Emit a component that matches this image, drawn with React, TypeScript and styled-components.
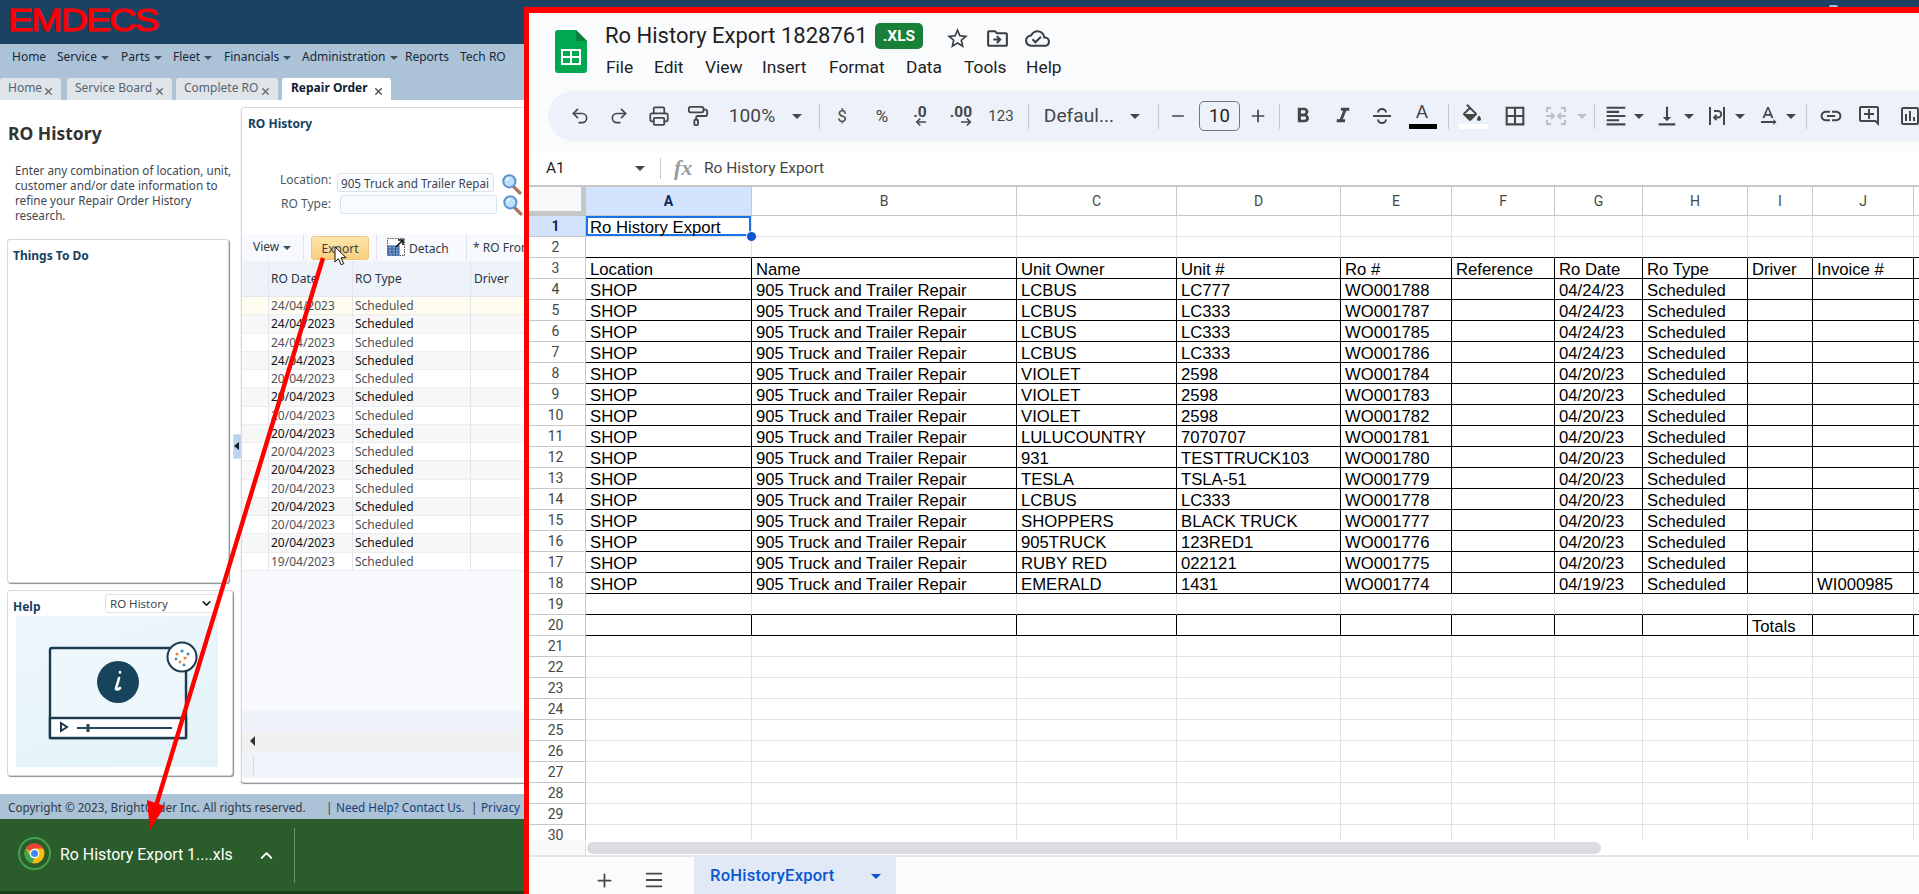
import React from "react";
import styled, { createGlobalStyle } from "styled-components";
import { ChevronDown, ChevronUp, Plus, Minus, Menu as MenuIcon, Undo2, Redo2, Printer, PaintRoller, X } from "lucide-react";
import {
  MdFormatBold, MdFormatItalic, MdFormatColorFill, MdBorderAll,
  MdFormatAlignLeft, MdVerticalAlignBottom, MdTextRotationNone, MdLink,
  MdOutlineAddComment, MdOutlineInsertChart, MdStarBorder, MdOutlineDriveFileMove, MdOutlineCloudDone,
} from "react-icons/md";

const Global = createGlobalStyle`
  html, body { margin: 0; padding: 0; background: #fff; overflow: hidden; }
  * { box-sizing: border-box; }
`;

const APP = `"Noto Sans", "Open Sans", sans-serif`;
const G = `Roboto, "Noto Sans", sans-serif`;
const ARIAL = `"Liberation Sans", Arial, sans-serif`;

const Page = styled.div`
  position: relative; width: 1919px; height: 894px; overflow: hidden; background: #fff;
  font-family: ${APP}; font-size: 12px;
`;

/* ---------- left application ---------- */
const TopBar = styled.header`position: absolute; left: 0; top: 0; width: 100%; height: 44px; background: #1c4263;`;
const Logo = styled.div`
  position: absolute; left: 8px; top: 2px; color: #fb0007; font: 400 32px/36px ${ARIAL};
  letter-spacing: -1.5px; transform-origin: left center; transform: scaleX(1.17);
  -webkit-text-stroke: 1.1px #fb0007;
`;
const AvatarPeek = styled.div`position: absolute; left: 1829px; top: 5px; width: 9px; height: 2px; background: #9fc2dc; border-radius: 4px 4px 0 0;`;
const NavBar = styled.nav`position: absolute; left: 0; top: 44px; width: 524px; height: 56px; background: #acc2d6;`;
const NavLink = styled.span<{ $x: number }>`
  position: absolute; left: ${(p) => p.$x}px; top: 3px; line-height: 20px; font-size: 12px; color: #17293b; white-space: nowrap;
  display: flex; align-items: center;
`;
const Caret = styled.i`
  display: inline-block; width: 0; height: 0; margin-left: 4px; margin-top: 2px;
  border-left: 4px solid transparent; border-right: 4px solid transparent; border-top: 4px solid #3d4f60;
`;
const TabBtn = styled.div<{ $x: number; $w: number; $on?: boolean }>`
  position: absolute; left: ${(p) => p.$x}px; top: 78px; width: ${(p) => p.$w}px; height: 22px;
  background: ${(p) => (p.$on ? "#fff" : "#dfe4e8")}; border-radius: 3px 3px 0 0;
  padding-left: ${(p) => (p.$on ? 9 : 8)}px; line-height: 20px; white-space: nowrap;
  color: ${(p) => (p.$on ? "#10202f" : "#566472")}; font-weight: ${(p) => (p.$on ? 700 : 400)}; font-size: 12px;
  svg { position: absolute; right: 7px; top: 8px; }
`;
const PageTitle = styled.h1`position: absolute; left: 8px; top: 121px; margin: 0; font: 700 17.5px/24px ${APP}; color: #333;`;
const Intro = styled.p`position: absolute; left: 15px; top: 163px; width: 222px; margin: 0; font-size: 11.7px; line-height: 15px; color: #3f4750;`;
const Card = styled.section<{ $w: number; $t: number; $h: number }>`
  position: absolute; left: 7px; top: ${(p) => p.$t}px; width: ${(p) => p.$w}px; height: ${(p) => p.$h}px;
  background: #fff; border: 1px solid #d5d8da; border-radius: 3px; box-shadow: 1px 1px 1px #8c8c8c;
`;
const CardTitle = styled.h3`position: absolute; left: 5px; top: 7px; margin: 0; font: 700 12px/18px ${APP}; color: #17405f;`;
const HelpSelect = styled.div`
  position: absolute; left: 97px; top: 3px; width: 113px; height: 19px; border: 1px solid #dde2e6; border-radius: 3px;
  background: #fff; color: #3d4852; font-size: 11.5px; line-height: 17px; padding-left: 4px;
  svg { position: absolute; right: 4px; top: 2px; }
`;
const HelpArt = styled.div`
  position: absolute; left: 8px; top: 25px; width: 202px; height: 151px;
  background: linear-gradient(160deg, #eef7fd 0%, #e2f3f8 100%);
`;
const Handle = styled.div`
  position: absolute; left: 233px; top: 434px; width: 8px; height: 25px; background: #bcd3ef; border: 1px solid #cfe0f4; border-radius: 1px;
  &:after { content: ""; position: absolute; left: 0; top: 7px; border-top: 4px solid transparent; border-bottom: 4px solid transparent; border-right: 5px solid #16202b; }
`;
const Panel = styled.section`
  position: absolute; left: 241px; top: 107px; width: 290px; height: 676px; background: #fff;
  border: 1px solid #d8dbdd; border-radius: 3px; box-shadow: 0 1px 1px #8c8c8c;
`;
const PanelTitle = styled.h2`position: absolute; left: 6px; top: 7px; margin: 0; font: 700 12px/18px ${APP}; color: #17405f;`;
const FieldLabel = styled.label<{ $x: number; $y: number }>`position: absolute; left: ${(p) => p.$x}px; top: ${(p) => p.$y}px; font-size: 12px; line-height: 18px; color: #4d5862;`;
const FieldInput = styled.input<{ $x: number; $y: number }>`
  position: absolute; left: ${(p) => p.$x}px; top: ${(p) => p.$y}px; width: 157px; height: 19px; padding: 0 3px; margin: 0;
  border: 1px solid #dae3ea; border-radius: 3px; background: #f9fcfe; color: #3a434c; font: 11.7px ${APP}; outline: none;
`;
const Lens = styled.svg<{ $x: number; $y: number }>`position: absolute; left: ${(p) => p.$x}px; top: ${(p) => p.$y}px;`;
const GridTools = styled.div`position: absolute; left: 0; top: 126px; width: 100%; height: 27px; background: #f7f9fc;`;
const ToolText = styled.span<{ $x: number; $y?: number }>`position: absolute; left: ${(p) => p.$x}px; top: ${(p) => p.$y ?? 4}px; line-height: 18px; font-size: 12px; color: #2f3a45; white-space: nowrap; display: flex; align-items: center;`;
const ToolSep = styled.i<{ $x: number }>`position: absolute; left: ${(p) => p.$x}px; top: 0; width: 1px; height: 26px; background: #dfe4ea;`;
const ExportBtn = styled.button`
  position: absolute; left: 69px; top: 2px; width: 58px; height: 24px; padding: 0; border: 1px solid #ecc67e; border-radius: 3px;
  background: linear-gradient(#fde6ad, #f9cf7c); color: #36404a; font: 12px ${APP};
`;
const DetachIcon = styled.svg`position: absolute; left: 145px; top: 4px;`;
const GridHead = styled.div`position: absolute; left: 0; top: 153px; width: 100%; height: 36px; background: #eef2f9; border-bottom: 1px solid #e3e7ee;`;
const ColLine = styled.i<{ $x: number; $h: number }>`position: absolute; z-index: 1; left: ${(p) => p.$x}px; top: 0; width: 1px; height: ${(p) => p.$h}px; background: #e2e6ec;`;
const HeadCell = styled.span<{ $x: number }>`position: absolute; left: ${(p) => p.$x}px; top: 9px; font-size: 12px; line-height: 18px; color: #263340;`;
const GridBody = styled.div`position: absolute; left: 0; top: 189px; width: 100%; height: 415px; background: #f7f9fd;`;
const GridRow = styled.div<{ $kind: number }>`
  position: relative; height: 18.25px; line-height: 17px; font-size: 12px; border-bottom: 1px solid #eceeef;
  background: ${(p) => (p.$kind === 0 ? "#fffdf0" : p.$kind === 1 ? "#f7f7f7" : "#fff")};
  color: ${(p) => (p.$kind === 1 ? "#0f141a" : "#4d5157")};
`;
const RowCell = styled.span<{ $x: number }>`position: absolute; left: ${(p) => p.$x}px; top: 0;`;
const GridBand = styled.div<{ $t: number; $h: number; $c: string }>`position: absolute; left: 0; top: ${(p) => p.$t}px; width: 100%; height: ${(p) => p.$h}px; background: ${(p) => p.$c};`;
const ScrollArrow = styled.i`position: absolute; left: 8px; top: 5px; border-top: 5px solid transparent; border-bottom: 5px solid transparent; border-right: 5px solid #333;`;
const PagerSep = styled.i`position: absolute; left: 11px; top: 4px; width: 1px; height: 19px; background: #d7dce4;`;
const Footer = styled.footer`position: absolute; left: 0; top: 794px; width: 524px; height: 25px; background: #acc2d6;`;
const FootText = styled.span<{ $x: number; $link?: boolean }>`position: absolute; left: ${(p) => p.$x}px; top: 4px; line-height: 18px; font-size: 11.7px; white-space: nowrap; color: ${(p) => (p.$link ? "#123f78" : "#2e3a46")};`;
const DownloadBar = styled.div`position: absolute; left: 0; top: 819px; width: 524px; height: 75px; background: #2a5c2c; border-bottom: 3px solid #1d3d1f;`;
const DownloadName = styled.span`position: absolute; left: 60px; top: 25px; font: 400 15.9px/22px ${G}; color: #fff; white-space: nowrap;`;
const DownloadChevron = styled(ChevronUp)`position: absolute; left: 257px; top: 27px; color: #fff;`;
const DownloadSep = styled.i`position: absolute; left: 294px; top: 9px; width: 1px; height: 55px; background: #6f8f70;`;
const ChromeSvg = styled.svg`position: absolute; left: 18px; top: 18px;`;
const Overlay = styled.svg`position: absolute; left: 0; top: 0; z-index: 5; pointer-events: none;`;

/* ---------- google sheet ---------- */
const Sheet = styled.main`
  position: absolute; z-index: 6; left: 524px; top: 7px; right: 0; bottom: 0; border-left: 5px solid #f00; border-top: 6px solid #f00;
  background: #f9fbfd; overflow: hidden;
`;
const SheetIcon = styled.svg`position: absolute; left: 26px; top: 17px;`;
const DocTitle = styled.h1`position: absolute; left: 76px; top: 9px; margin: 0; font: 400 22px/28px ${G}; color: #1f1f1f; white-space: nowrap;`;
const Badge = styled.span`
  position: absolute; left: 346px; top: 10px; width: 48px; height: 26px; background: #188038; border-radius: 5px; color: #fff;
  font: 700 15.5px/26px ${G}; text-align: center;
`;
const HeadIcon = styled.span<{ $x: number }>`position: absolute; left: ${(p) => p.$x - 529 - 13}px; top: 12px; width: 26px; height: 26px; color: #3c4043; display: flex; align-items: center; justify-content: center;`;
const MenuItem = styled.span<{ $x: number }>`position: absolute; left: ${(p) => p.$x - 529}px; top: 43px; font: 400 17.4px/22px ${G}; color: #1f1f1f;`;
const ToolPill = styled.div`position: absolute; left: 19px; top: 78px; width: 1400px; height: 50px; background: #edf2fa; border-radius: 25px 0 0 25px; color: #444746;`;
const Tool = styled.span<{ $x: number; $muted?: boolean }>`
  position: absolute; left: ${(p) => p.$x - 548}px; top: 25px; transform: translate(-50%, -50%); display: flex; align-items: center; justify-content: center;
  color: ${(p) => (p.$muted ? "#bcc0c4" : "#444746")}; font: 400 17px/22px ${G}; white-space: nowrap;
`;
const ToolLargeText = styled(Tool)`font-size: 19.2px;`;
const ToolSmallText = styled(Tool)`font-size: 15px;`;
const ToolColorA = styled(Tool)`top: 21px; font-size: 19px; font-weight: 400;`;
const PillSep = styled.i<{ $x: number }>`position: absolute; left: ${(p) => p.$x - 548}px; top: 13px; width: 1px; height: 25px; background: #c7c7c7;`;
const Tri = styled.i<{ $x: number; $muted?: boolean }>`position: absolute; left: ${(p) => p.$x - 548 - 5}px; top: 23px; border-left: 5px solid transparent; border-right: 5px solid transparent; border-top: 5px solid ${(p) => (p.$muted ? "#bcc0c4" : "#444746")};`;
const SizeBox = styled.span`position: absolute; left: 651px; top: 10px; width: 41px; height: 30px; border: 1px solid #747775; border-radius: 5px; text-align: center; font: 400 18.5px/28px ${G}; color: #1f1f1f;`;
const ColorBar = styled.i<{ $x: number; $w: number; $c: string }>`position: absolute; left: ${(p) => p.$x - 548}px; top: 33px; width: ${(p) => p.$w}px; height: 5px; background: ${(p) => p.$c};`;
const FormulaBar = styled.div`position: absolute; left: 0; top: 138px; width: 100%; height: 36px; background: #fff; border-bottom: 2px solid #c7c7c7;`;
const CellName = styled.span`position: absolute; left: 17px; top: 6px; font: 400 15.5px/22px ${G}; color: #1f1f1f;`;
const FormulaTri = styled.i`position: absolute; left: 106px; top: 15px; border-left: 5px solid transparent; border-right: 5px solid transparent; border-top: 5px solid #444746;`;
const FormulaSep = styled.i`position: absolute; left: 131px; top: 7px; width: 1px; height: 21px; background: #c7c7c7;`;
const Fx = styled.span`position: absolute; left: 145px; top: 4px; font: italic 700 22px/26px "Liberation Serif", serif; color: #9a9b9c;`;
const FormulaText = styled.span`position: absolute; left: 175px; top: 6px; font: 400 15.5px/22px ${G}; color: #444746;`;
const SheetGrid = styled.div`
  position: absolute; left: 0; top: 174px; width: 1390px; height: 653px; overflow: hidden; background: #fff; display: grid;
  grid-template-columns: 57px 166px 265px 160px 164px 111px 103px 88px 105px 65px 101px 20px;
  grid-auto-rows: 21px; grid-template-rows: 29px;
`;
const Corner = styled.div`background: #f8f9fa; border-right: 5px solid #c4c7c5; border-bottom: 5px solid #c4c7c5;`;
const ColHead = styled.div<{ $on?: boolean }>`
  display: flex; align-items: center; justify-content: center; border-right: 1px solid #c7c7c7; border-bottom: 1px solid #c7c7c7;
  font: ${(p) => (p.$on ? 700 : 400)} 14px ${G}; background: ${(p) => (p.$on ? "#d3e3fd" : "#fff")}; color: ${(p) => (p.$on ? "#0b2a55" : "#444746")};
`;
const RowHead = styled.div<{ $on?: boolean }>`
  display: flex; align-items: center; justify-content: center; padding-right: 3px; border-right: 1px solid #c7c7c7; border-bottom: 1px solid #c7c7c7;
  font: ${(p) => (p.$on ? 700 : 400)} 14px ${G}; background: ${(p) => (p.$on ? "#d3e3fd" : "#fff")}; color: ${(p) => (p.$on ? "#0b2a55" : "#444746")};
`;
const Cell = styled.div<{ $ink?: boolean; $under?: boolean; $sel?: boolean }>`
  position: relative; padding: 1px 0 0 4px; font: 400 16.7px/21px ${ARIAL}; color: #000; white-space: nowrap; overflow: visible;
  border-right: 1px solid ${(p) => (p.$ink ? "#000" : "#e1e1e1")}; border-bottom: 1px solid ${(p) => (p.$ink || p.$under ? "#000" : "#e1e1e1")};
  ${(p) => p.$sel && `box-shadow: inset 0 0 0 2px #1a73e8; z-index: 2;`}
`;
const FillDot = styled.i`position: absolute; right: -6px; bottom: -6px; width: 11px; height: 11px; border-radius: 50%; background: #0b57d0; border: 1px solid #fff; z-index: 3;`;
const HScroll = styled.div`position: absolute; left: 0; top: 827px; width: 100%; height: 17px; background: #fff; border-bottom: 2px solid #e3e5e8;`;
const Thumb = styled.i`position: absolute; left: 58px; top: 2px; width: 1014px; height: 12px; border-radius: 6px; background: #dadce0;`;
const ScrollCorner = styled.i`position: absolute; left: 0; top: 0; width: 57px; height: 15px; background: #f8f9fa; border-right: 1px solid #e1e1e1;`;
const SheetTabs = styled.div`position: absolute; left: 0; top: 844px; width: 100%; height: 37px; background: #f9fbfd;`;
const TabIcon = styled.span<{ $x: number }>`position: absolute; left: ${(p) => p.$x - 529 - 11}px; top: 12px; width: 22px; height: 22px; display: flex; align-items: center; justify-content: center; color: #444746;`;
const ActiveSheet = styled.div`
  position: absolute; left: 165px; top: 0; width: 202px; height: 37px; background: #e1e9f7; color: #0b57d0;
  font: 500 16.6px/37px ${G}; padding-left: 16px; letter-spacing: 0.2px;
`;
const ActiveTri = styled.i`position: absolute; left: 177px; top: 17px; border-left: 5px solid transparent; border-right: 5px solid transparent; border-top: 5px solid #0b57d0;`;

const nav: [string, number, boolean][] = [
  ["Home", 12, false], ["Service", 57, true], ["Parts", 121, true], ["Fleet", 173, true],
  ["Financials", 224, true], ["Administration", 302, true], ["Reports", 405, false], ["Tech RO", 460, false],
];
const tabs: [string, number, number, boolean][] = [
  ["Home", 0, 61, false], ["Service Board", 67, 105, false], ["Complete RO", 176, 102, false], ["Repair Order", 282, 109, true],
];
const dates = [...Array(4).fill("24/04/2023"), ...Array(10).fill("20/04/2023"), "19/04/2023"] as string[];

const cols = ["A", "B", "C", "D", "E", "F", "G", "H", "I", "J", "K"];
const B = "905 Truck and Trailer Repair";
const data: [string, string, string, string][] = [
  ["LCBUS", "LC777", "WO001788", "04/24/23"], ["LCBUS", "LC333", "WO001787", "04/24/23"],
  ["LCBUS", "LC333", "WO001785", "04/24/23"], ["LCBUS", "LC333", "WO001786", "04/24/23"],
  ["VIOLET", "2598", "WO001784", "04/20/23"], ["VIOLET", "2598", "WO001783", "04/20/23"],
  ["VIOLET", "2598", "WO001782", "04/20/23"], ["LULUCOUNTRY", "7070707", "WO001781", "04/20/23"],
  ["931", "TESTTRUCK103", "WO001780", "04/20/23"], ["TESLA", "TSLA-51", "WO001779", "04/20/23"],
  ["LCBUS", "LC333", "WO001778", "04/20/23"], ["SHOPPERS", "BLACK TRUCK", "WO001777", "04/20/23"],
  ["905TRUCK", "123RED1", "WO001776", "04/20/23"], ["RUBY RED", "022121", "WO001775", "04/20/23"],
  ["EMERALD", "1431", "WO001774", "04/19/23"],
];

function rowCells(r: number): string[] {
  const empty = Array(11).fill("") as string[];
  if (r === 1) { empty[0] = "Ro History Export"; return empty; }
  if (r === 3) return ["Location", "Name", "Unit Owner", "Unit #", "Ro #", "Reference", "Ro Date", "Ro Type", "Driver", "Invoice #", ""];
  if (r >= 4 && r <= 18) {
    const d = data[r - 4];
    return ["SHOP", B, d[0], d[1], d[2], "", d[3], "Scheduled", "", r === 18 ? "WI000985" : "", ""];
  }
  if (r === 20) { empty[8] = "Totals"; return empty; }
  return empty;
}

const MagIcon = ({ x, y }: { x: number; y: number }) => (
  <Lens $x={x} $y={y} width="20" height="21" viewBox="0 0 19 20">
    <path d="M10.5 11.5 L17 18" stroke="#a9745b" strokeWidth="3.2" strokeLinecap="round" />
    <circle cx="7" cy="7" r="5.8" fill="#bfe0fb" stroke="#5b93d6" strokeWidth="1.9" />
    <path d="M4 7a3 3 0 0 1 3-3" stroke="#fff" strokeWidth="1.2" fill="none" />
  </Lens>
);

const DecArrow = ({ dir }: { dir: "l" | "r" }) => (
  <svg width="11" height="9" viewBox="0 0 11 9">
    {dir === "l"
      ? <path d="M11 4.5H2M5 1 1.5 4.5 5 8" stroke="#444746" strokeWidth="1.6" fill="none" />
      : <path d="M0 4.5h9M6 1l3.5 3.5L6 8" stroke="#444746" strokeWidth="1.6" fill="none" />}
  </svg>
);

const DecTool = styled(Tool)`flex-direction: column; align-items: flex-end; font-size: 15.5px; font-weight: 700; line-height: 12px;`;

const StrikeIcon = () => (
  <svg width="24" height="24" viewBox="0 0 24 24" fill="none" stroke="#444746" strokeWidth="2">
    <path d="M3 12h18" />
    <path d="M8 8.5c0-2 1.8-3.5 4-3.5s4 1.5 4 3.5" />
    <path d="M8 15.5c0 2 1.8 3.5 4 3.5s4-1.5 4-3.5" />
  </svg>
);
const MergeIcon = () => (
  <svg width="24" height="24" viewBox="0 0 24 24" fill="none" stroke="#bcc0c4" strokeWidth="2">
    <path d="M3 8V4h4M3 11v2M3 16v4h4M21 8V4h-4M21 11v2M21 16v4h-4" />
    <path d="M3 12h7M7 9l3 3-3 3M21 12h-7M17 9l-3 3 3 3" strokeWidth="1.8" />
  </svg>
);
const WrapIcon = () => (
  <svg width="24" height="24" viewBox="0 0 24 24" fill="none" stroke="#444746" strokeWidth="2">
    <path d="M5 3v18M19 3v18" />
    <path d="M9 7h4a3 3 0 0 1 0 6.5H9M11.5 11 9 13.5l2.5 2.5" strokeWidth="1.8" />
  </svg>
);

export default function App() {
  return (
    <Page>
      <Global />
      <TopBar>
        <Logo>EMDECS</Logo>
        <AvatarPeek />
      </TopBar>
      <NavBar>
        {nav.map(([t, x, c]) => (
          <NavLink key={t} $x={x}>{t}{c && <Caret />}</NavLink>
        ))}
      </NavBar>
      {tabs.map(([t, x, w, on]) => (
        <TabBtn key={t} $x={x} $w={w} $on={on}>
          {t}
          <X size={11} strokeWidth={2.8} color={on ? "#444" : "#666"} />
        </TabBtn>
      ))}
      <PageTitle>RO History</PageTitle>
      <Intro>Enter any combination of location, unit, customer and/or date information to refine your Repair Order History research.</Intro>
      <Card $w={222} $t={239} $h={344}>
        <CardTitle>Things To Do</CardTitle>
      </Card>
      <Card $w={226} $t={590} $h={186}>
        <CardTitle>Help</CardTitle>
        <HelpSelect>RO History<ChevronDown size={13} strokeWidth={3} color="#222" /></HelpSelect>
        <HelpArt>
          <svg width="202" height="151" viewBox="0 0 202 151">
            <rect x="34" y="32" width="136" height="90" rx="2" fill="#eef8fc" stroke="#1b3a4d" strokeWidth="2.4" />
            <rect x="34" y="102" width="136" height="20" fill="#fff" stroke="#1b3a4d" strokeWidth="2.4" />
            <circle cx="102" cy="66" r="21" fill="#17445c" />
            <path d="M104 56v.5M103 62c-1 5-3 9-3 11 1 1 3 0 4-1" stroke="#fff" strokeWidth="2.6" fill="none" strokeLinecap="round" />
            <path d="M45 107l6 4-6 4z" fill="none" stroke="#1b3a4d" strokeWidth="2" />
            <path d="M61 112h95" stroke="#24465a" strokeWidth="2" />
            <path d="M72 108v8" stroke="#24465a" strokeWidth="3" />
            <circle cx="166" cy="41" r="14.5" fill="#fff" stroke="#1b3a4d" strokeWidth="2" />
            <g fill="#e8853a"><circle cx="161" cy="38" r="1.6" /><circle cx="169" cy="42" r="1.6" /><circle cx="164" cy="46" r="1.4" /></g>
            <g fill="#3d8dc4"><circle cx="166" cy="35" r="1.6" /><circle cx="172" cy="38" r="1.5" /><circle cx="160" cy="43" r="1.4" /><circle cx="168" cy="49" r="1.4" /></g>
          </svg>
        </HelpArt>
      </Card>
      <Handle />
      <Panel>
        <PanelTitle>RO History</PanelTitle>
        <FieldLabel $x={38} $y={63}>Location:</FieldLabel>
        <FieldInput $x={95} $y={65} readOnly value="905 Truck and Trailer Repair" />
        <MagIcon x={260} y={66} />
        <FieldLabel $x={39} $y={87}>RO Type:</FieldLabel>
        <FieldInput $x={98} $y={87} readOnly value="" />
        <MagIcon x={261} y={87} />
        <GridTools>
          <ToolText $x={11}>View<Caret /></ToolText>
          <ToolSep $x={61} />
          <ExportBtn>Export</ExportBtn>
          <ToolSep $x={134} />
          <DetachIcon width="18" height="18" viewBox="0 0 18 18">
            <rect x=".5" y=".5" width="17" height="17" fill="#fff" stroke="#555" strokeDasharray="1.5 1" />
            <rect x="1" y="8" width="11" height="9" fill="#7aa2d8" stroke="#2a5a9c" />
            <path d="M1 11h11M1 14h11M5 8v9M8.5 8v9" stroke="#24507f" strokeWidth=".8" />
            <path d="M9 9l7-7M11 2h5v5" stroke="#111" strokeWidth="1.6" fill="none" />
          </DetachIcon>
          <ToolText $x={167} $y={6}>Detach</ToolText>
          <ToolSep $x={224} />
          <ToolText $x={231} $y={5}>* RO From</ToolText>
        </GridTools>
        <GridHead>
          <ColLine $x={26} $h={36} /><ColLine $x={110} $h={36} /><ColLine $x={228} $h={36} />
          <HeadCell $x={29}>RO Date</HeadCell>
          <HeadCell $x={113}>RO Type</HeadCell>
          <HeadCell $x={232}>Driver</HeadCell>
        </GridHead>
        <GridBody>
          {dates.map((d, i) => (
            <GridRow key={i} $kind={i === 0 ? 0 : i % 2 ? 1 : 2}>
              <ColLine $x={26} $h={18} /><ColLine $x={110} $h={18} /><ColLine $x={228} $h={18} />
              <RowCell $x={29}>{d}</RowCell>
              <RowCell $x={113}>Scheduled</RowCell>
            </GridRow>
          ))}
        </GridBody>
        <GridBand $t={603} $h={20} $c="#eef2f9" />
        <GridBand $t={623} $h={21} $c="#f0f0f0"><ScrollArrow /></GridBand>
        <GridBand $t={644} $h={26} $c="#eff3fa"><PagerSep /></GridBand>
      </Panel>
      <Footer>
        <FootText $x={8}>Copyright © 2023, BrightOrder Inc. All rights reserved.</FootText>
        <FootText $x={326}>|</FootText>
        <FootText $x={336} $link>Need Help? Contact Us.</FootText>
        <FootText $x={471}>|</FootText>
        <FootText $x={481} $link>Privacy</FootText>
      </Footer>
      <DownloadBar>
        <ChromeSvg width="33" height="33" viewBox="0 0 33 33">
          <circle cx="16.5" cy="16.5" r="15.5" fill="none" stroke="#43a04a" strokeWidth="2" />
          <circle cx="16.5" cy="16.5" r="10" fill="#fbbc04" />
          <path d="M16.5 6.5a10 10 0 0 1 8.66 5H16.5a5 5 0 0 0-4.33 2.5L7.84 11.5a10 10 0 0 1 8.66-5z" fill="#ea4335" />
          <path d="M7.84 11.5l4.33 7.5a5 5 0 0 0 4.33 2.5l-2.5 4.7a10 10 0 0 1-6.16-14.7z" fill="#34a853" />
          <circle cx="16.5" cy="16.5" r="4.2" fill="#4285f4" stroke="#fff" strokeWidth="1.2" />
        </ChromeSvg>
        <DownloadName>Ro History Export 1....xls</DownloadName>
        <DownloadChevron size={19} strokeWidth={2.6} />
        <DownloadSep />
      </DownloadBar>
      <Overlay width="1919" height="894" viewBox="0 0 1919 894">
        <path d="M323 258 L156 806" stroke="#f00" strokeWidth="4.4" />
        <polygon points="150,830 147,800 165,806" fill="#f00" />
        <path d="M335 248v15l3.5-3.3 2.6 6 2.6-1.1-2.6-5.9h5z" fill="#fff" stroke="#111" strokeWidth="1" transform="translate(0 -1)" />
      </Overlay>

      <Sheet>
        <SheetIcon width="32" height="43" viewBox="0 0 32 43">
          <path d="M3 0h18l11 11v29a3 3 0 0 1-3 3H3a3 3 0 0 1-3-3V3a3 3 0 0 1 3-3z" fill="#00a94f" />
          <path d="M21 0l11 11H23a2 2 0 0 1-2-2z" fill="#0a7e3c" />
          <rect x="7" y="20" width="18" height="14" fill="none" stroke="#fff" strokeWidth="2" />
          <path d="M16 20v14M7 27h18" stroke="#fff" strokeWidth="2" />
        </SheetIcon>
        <DocTitle>Ro History Export 1828761</DocTitle>
        <Badge>.XLS</Badge>
        <HeadIcon $x={957}><MdStarBorder size={25} /></HeadIcon>
        <HeadIcon $x={997}><MdOutlineDriveFileMove size={25} /></HeadIcon>
        <HeadIcon $x={1037}><MdOutlineCloudDone size={25} /></HeadIcon>
        {([["File", 606], ["Edit", 654], ["View", 705], ["Insert", 762], ["Format", 829], ["Data", 906], ["Tools", 964], ["Help", 1026]] as [string, number][]).map(([t, x]) => (
          <MenuItem key={t} $x={x}>{t}</MenuItem>
        ))}
        <ToolPill>
          <Tool $x={580}><Undo2 size={20} strokeWidth={2} /></Tool>
          <Tool $x={619}><Redo2 size={20} strokeWidth={2} /></Tool>
          <Tool $x={659}><Printer size={21} strokeWidth={2} /></Tool>
          <Tool $x={698}><PaintRoller size={22} strokeWidth={2} /></Tool>
          <ToolLargeText $x={752}>100%</ToolLargeText>
          <Tri $x={797} />
          <PillSep $x={819} />
          <Tool $x={842}>$</Tool>
          <Tool $x={882}>%</Tool>
          <DecTool $x={920}><span>.0</span><DecArrow dir="l" /></DecTool>
          <DecTool $x={961}><span>.00</span><DecArrow dir="r" /></DecTool>
          <ToolSmallText $x={1001}>123</ToolSmallText>
          <PillSep $x={1028} />
          <ToolLargeText $x={1079}>Defaul...</ToolLargeText>
          <Tri $x={1135} />
          <PillSep $x={1158} />
          <Tool $x={1178}><Minus size={18} strokeWidth={2.2} /></Tool>
          <SizeBox>10</SizeBox>
          <Tool $x={1258}><Plus size={19} strokeWidth={2.2} /></Tool>
          <PillSep $x={1279} />
          <Tool $x={1303}><MdFormatBold size={25} /></Tool>
          <Tool $x={1343}><MdFormatItalic size={25} /></Tool>
          <Tool $x={1382}><StrikeIcon /></Tool>
          <ToolColorA $x={1422}>A</ToolColorA>
          <ColorBar $x={1409} $w={28} $c="#000" />
          <PillSep $x={1448} />
          <Tool $x={1472}><MdFormatColorFill size={24} /></Tool>
          <ColorBar $x={1459} $w={29} $c="#fff" />
          <Tool $x={1515}><MdBorderAll size={25} /></Tool>
          <Tool $x={1556} $muted><MergeIcon /></Tool>
          <Tri $x={1582} $muted />
          <PillSep $x={1594} />
          <Tool $x={1616}><MdFormatAlignLeft size={25} /></Tool>
          <Tri $x={1639} />
          <Tool $x={1667}><MdVerticalAlignBottom size={25} /></Tool>
          <Tri $x={1689} />
          <Tool $x={1717}><WrapIcon /></Tool>
          <Tri $x={1740} />
          <Tool $x={1768}><MdTextRotationNone size={24} /></Tool>
          <Tri $x={1791} />
          <PillSep $x={1806} />
          <Tool $x={1831}><MdLink size={25} /></Tool>
          <Tool $x={1869}><MdOutlineAddComment size={24} /></Tool>
          <Tool $x={1910}><MdOutlineInsertChart size={24} /></Tool>
        </ToolPill>
        <FormulaBar>
          <CellName>A1</CellName>
          <FormulaTri />
          <FormulaSep />
          <Fx>fx</Fx>
          <FormulaText>Ro History Export</FormulaText>
        </FormulaBar>
        <SheetGrid>
          <Corner />
          {cols.map((c, i) => <ColHead key={c} $on={i === 0}>{c}</ColHead>)}
          {Array.from({ length: 30 }, (_, idx) => {
            const r = idx + 1;
            const ink = (r >= 3 && r <= 18) || r === 20;
            const under = r === 2 || r === 19;
            return (
              <React.Fragment key={r}>
                <RowHead $on={r === 1}>{r}</RowHead>
                {rowCells(r).map((v, i) => (
                  <Cell key={i} $ink={ink} $under={under} $sel={r === 1 && i === 0}>
                    {v}
                    {r === 1 && i === 0 && <FillDot />}
                  </Cell>
                ))}
              </React.Fragment>
            );
          })}
        </SheetGrid>
        <HScroll><ScrollCorner /><Thumb /></HScroll>
        <SheetTabs>
          <TabIcon $x={604}><Plus size={21} strokeWidth={2} /></TabIcon>
          <TabIcon $x={654}><MenuIcon size={22} strokeWidth={2} /></TabIcon>
          <ActiveSheet>RoHistoryExport<ActiveTri /></ActiveSheet>
        </SheetTabs>
      </Sheet>
    </Page>
  );
}
